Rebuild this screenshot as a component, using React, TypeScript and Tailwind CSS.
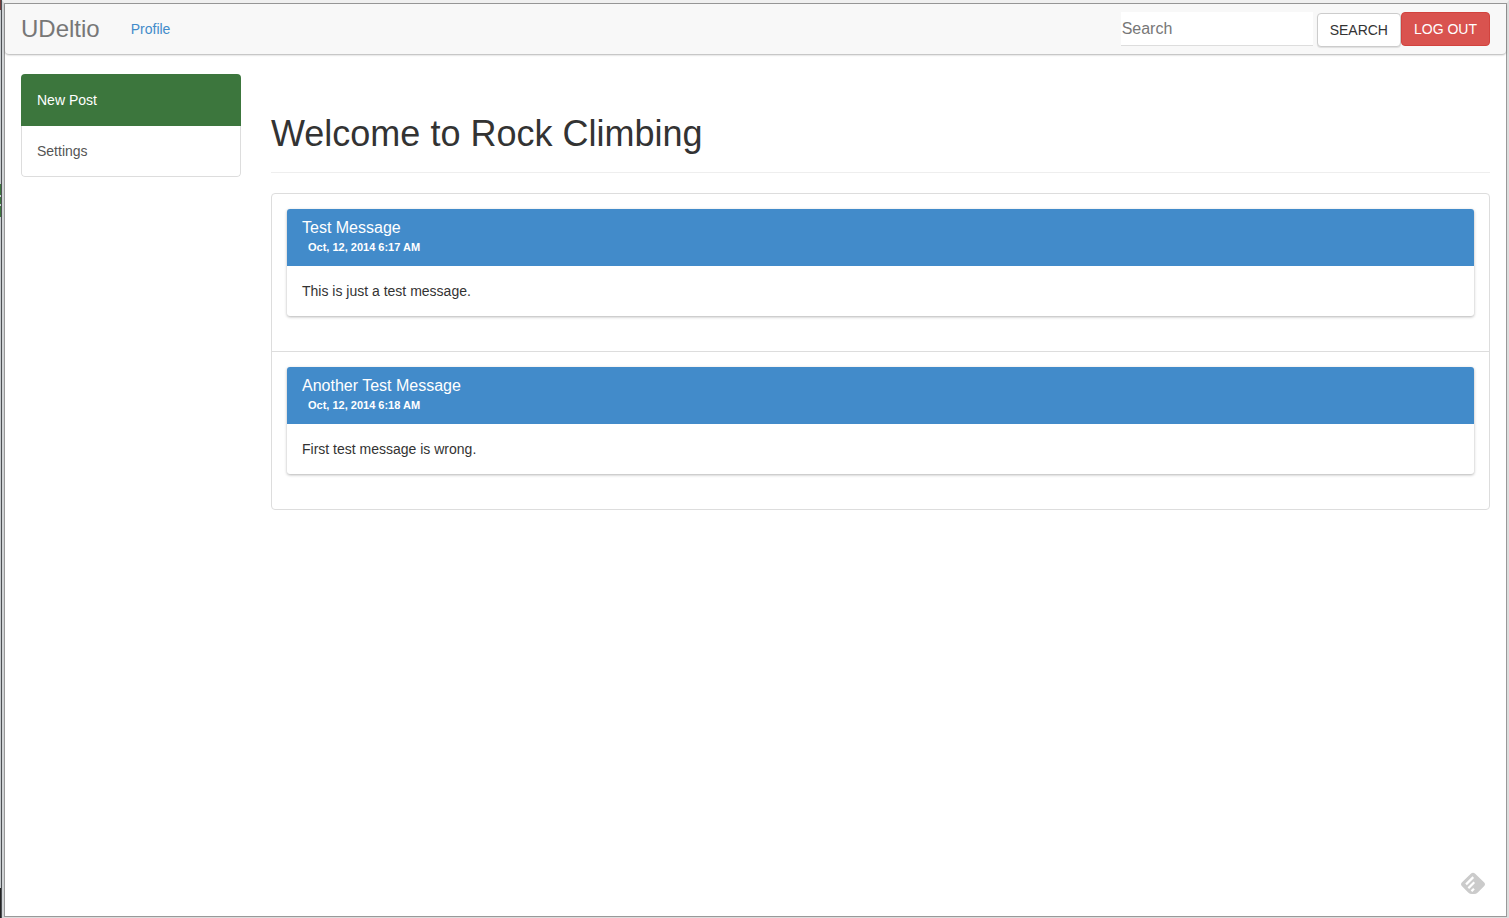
type Post = { title: string; date: string; body: string };

const posts: Post[] = [
  { title: "Test Message", date: "Oct, 12, 2014 6:17 AM", body: "This is just a test message." },
  { title: "Another Test Message", date: "Oct, 12, 2014 6:18 AM", body: "First test message is wrong." },
];

function Navbar() {
  return (
    <nav className="flex h-[50px] items-center rounded-b bg-[#f8f8f8] px-4 shadow-[0_1px_2px_rgba(0,0,0,0.3)]">
      <a href="#home" className="text-2xl text-[#777777]">
        UDeltio
      </a>
      <a href="#profile" className="ml-[31px] text-[#428bca]">
        Profile
      </a>
      <div className="ml-auto flex items-center">
        <form className="flex items-center" onSubmit={(e) => e.preventDefault()}>
          <input
            type="text"
            aria-label="Search"
            placeholder="Search"
            className="mr-1 h-[34px] w-48 bg-white px-px text-base text-[#555555] shadow-[inset_0_-1px_0_#dddddd] outline-none placeholder:text-[#777777]"
          />
          <button
            type="submit"
            className="mt-[2px] h-[34px] rounded border border-[#cccccc] bg-white px-3 uppercase text-[#333333] shadow-[0_1px_1px_rgba(0,0,0,0.1)]"
          >
            Search
          </button>
        </form>
        <button
          type="button"
          className="h-[34px] rounded border border-[#d2433e] bg-[#d9534f] px-3 uppercase text-white"
        >
          Log out
        </button>
      </div>
    </nav>
  );
}

function Sidebar() {
  return (
    <aside className="w-[220px] shrink-0 self-start overflow-hidden rounded">
      <a href="#new-post" className="block bg-[#3c763d] px-4 py-4 text-white">
        New Post
      </a>
      <a
        href="#settings"
        className="block rounded-b border border-t-0 border-[#dddddd] px-[15px] py-[15px] text-[#555555]"
      >
        Settings
      </a>
    </aside>
  );
}

function PostCard({ post }: { post: Post }) {
  return (
    <article className="overflow-hidden rounded-[3px] bg-white shadow-[0_1px_3px_rgba(0,0,0,0.3)]">
      <header className="h-[57px] bg-[#428bca] px-[15px] pt-[9px] text-white">
        <h2 className="text-base leading-5">{post.title}</h2>
        <p className="pl-[6px] text-[11px] font-bold leading-[18px]">{post.date}</p>
      </header>
      <p className="px-[15px] py-[15px]">{post.body}</p>
    </article>
  );
}

function FeedbackIcon() {
  return (
    <svg viewBox="0 0 26 24" className="h-6 w-[26px]" aria-hidden="true">
      <path
        d="M10.8 1.7Q13 -.3 15.2 1.7L24 10.2Q26 12.2 24 14.2L17.8 20.5Q16.2 22 14 22H12Q9.8 22 8.2 20.5L2 14.2Q0 12.2 2 10.2Z"
        fill="#cbcbcb"
      />
      <g stroke="white" strokeWidth="2.2" strokeLinecap="square">
        <path d="M6.8 11.6L12.5 5.9" />
        <path d="M9.2 15.4L13.5 11.1" />
        <path d="M12.3 18.4L13.2 17.5" />
      </g>
    </svg>
  );
}

export default function App() {
  return (
    <div className="flex min-h-screen bg-[#d5d8da] font-['Liberation_Sans',Arial,sans-serif] text-sm leading-5 text-[#333333]">
      <div className="flex w-[2px] shrink-0 flex-col border-r border-[#4c5054] bg-[#c8cccf]" aria-hidden="true">
        <div className="h-[10px] bg-[#753c3c]" />
        <div className="h-[174px]" />
        <div className="h-[11px] bg-[#3c763d]" />
        <div className="h-[2px]" />
        <div className="h-[7px] bg-[#3c763d]" />
        <div className="h-[2px]" />
        <div className="h-[11px] bg-[#3c763d]" />
        <div className="flex-1" />
        <div className="h-[30px] bg-[#222222]" />
      </div>
      <div className="flex min-w-0 flex-1 flex-col border-t-[3px] border-r-2 border-b border-l-2 border-t-[#f0f0f0] border-r-[#dddddd] border-b-[#dddddd] border-l-[#d0d3d5]">
        <div className="flex flex-1 flex-col border border-[#999999] bg-white">
          <Navbar />
          <div className="flex flex-1 gap-[30px] px-4 pt-5">
            <Sidebar />
            <main className="min-w-0 flex-1">
              <h1 className="mt-10 border-b border-[#eeeeee] pb-[19px] text-4xl leading-[39px]">
                Welcome to Rock Climbing
              </h1>
              <ul className="mt-5 divide-y divide-[#dddddd] rounded border border-[#dddddd]">
                {posts.map((post) => (
                  <li key={post.title} className="px-[15px] pt-[15px] pb-[35px]">
                    <PostCard post={post} />
                  </li>
                ))}
              </ul>
            </main>
          </div>
        </div>
      </div>
      <button type="button" aria-label="Open reader" className="fixed right-[23px] bottom-[22px]">
        <FeedbackIcon />
      </button>
    </div>
  );
}
